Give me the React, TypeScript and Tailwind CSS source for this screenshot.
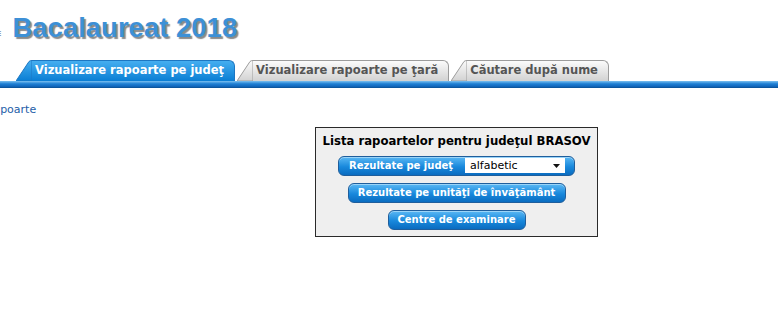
import React from 'react'

const verdana = { fontFamily: '"DejaVu Sans", Verdana, sans-serif' }

function Tab({ label, active, first }: { label: string; active?: boolean; first?: boolean }) {
  const id = active ? 'tabActive' : 'tabIdle'
  return (
    <div className={`flex items-stretch h-[21px] ${first ? '' : 'ml-[2px]'}`}>
      <svg width="16" height="21" viewBox="0 0 16 21" className="block shrink-0">
        <defs>
          <linearGradient id={id} x1="0" y1="0" x2="0" y2="1">
            <stop offset="0" stopColor={active ? '#45aef0' : '#fbfbfb'} />
            <stop offset="1" stopColor={active ? '#0a7ed4' : '#d2d2d2'} />
          </linearGradient>
        </defs>
        <path
          d="M0 21 L13 1.5 Q14 0.5 16 0.5 L16 21 Z"
          fill={`url(#${id})`}
          stroke={active ? '#1d77c2' : '#9c9c9c'}
          strokeWidth="1"
        />
      </svg>
      <div
        className={`flex items-center pl-[3px] pr-[10px] rounded-tr-[6px] border-t border-r whitespace-nowrap ${
          active
            ? 'bg-[linear-gradient(to_bottom,#45aef0,#0a7ed4)] border-[#1d77c2] text-white'
            : 'bg-[linear-gradient(to_bottom,#fbfbfb,#d2d2d2)] border-[#9c9c9c] text-[#555]'
        } text-[11.5px] font-bold leading-none`}
        style={verdana}
      >
        {label}
      </div>
    </div>
  )
}

function BlueButton({ children, className }: { children: React.ReactNode; className?: string }) {
  return (
    <div
      className={`flex items-center h-[20px] rounded-[6px] border border-[#1f5e9c] bg-[linear-gradient(to_bottom,#5ab8f4,#1888dc_55%,#0a6cc0)] shadow-[inset_0_1px_0_#9ad4f8] text-white text-[10px] font-bold leading-none whitespace-nowrap ${className ?? ''}`}
      style={verdana}
    >
      {children}
    </div>
  )
}

export default function App() {
  return (
    <div className="w-[778px] h-[310px] bg-white overflow-hidden" style={verdana}>
      <div className="flex items-end h-[44px]">
        <span className="text-[7px] text-[#23447a] leading-none mb-[6px] -ml-[3px] mr-[11px]">
          E
        </span>
        <h1
          className="text-[27.5px] font-bold leading-none text-[#3d90d6] [text-shadow:2px_2px_1px_#8a8a8a] mb-[3px]"
          style={{ fontFamily: '"Liberation Sans", Arial, sans-serif' }}
        >
          Bacalaureat 2018
        </h1>
      </div>

      <div className="flex items-end pl-[16px] mt-[16px]">
        <Tab label="Vizualizare rapoarte pe judeţ" active first />
        <Tab label="Vizualizare rapoarte pe ţară" />
        <Tab label="Căutare după nume" />
      </div>
      <div className="h-[7px] bg-[linear-gradient(to_bottom,#7cc0f0,#1f80d4_40%,#1268be_75%,#0a4f92)]" />

      <div className="mt-[16px] -ml-[14px] text-[11px] text-[#1e5ea8] leading-none">Rapoarte</div>

      <div className="ml-[315px] mt-[12px] w-[283px] h-[110px] border border-[#2a2a2a] bg-[#efefef] flex flex-col items-center pt-[5px]">
        <div className="text-[11.7px] font-bold text-black leading-none mt-[3px] whitespace-nowrap">
          Lista rapoartelor pentru judeţul BRASOV
        </div>
        <BlueButton className="mt-[8px] w-[237px] pl-[10px] pr-[9px] justify-between">
          <span>Rezultate pe judeţ</span>
          <span className="flex items-center justify-between w-[100px] h-[15px] bg-white text-black font-normal text-[11px] pl-[5px] pr-[5px]">
            alfabetic
            <svg width="7" height="4" viewBox="0 0 7 4">
              <path d="M0 0 H7 L3.5 4 Z" fill="#111" />
            </svg>
          </span>
        </BlueButton>
        <BlueButton className="mt-[7px] w-[218px] justify-center">
          Rezultate pe unităţi de învăţământ
        </BlueButton>
        <BlueButton className="mt-[7px] w-[138px] justify-center">Centre de examinare</BlueButton>
      </div>
    </div>
  )
}
